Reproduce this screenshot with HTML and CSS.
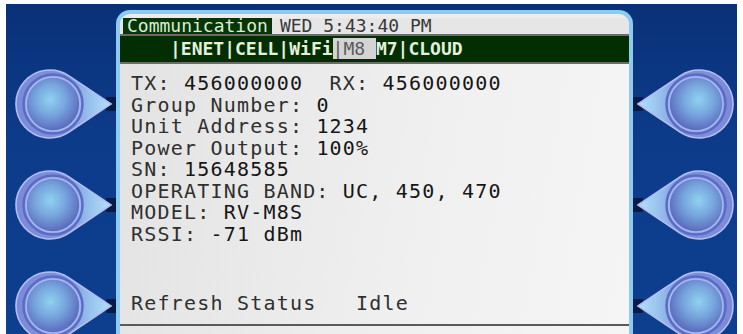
FILE: index.html
```html
<!DOCTYPE html>
<html lang="en">
<head>
    <meta charset="UTF-8">
    <meta name="viewport" content="width=device-width, initial-scale=1.0">
    <title>Communication - M8</title>
    <link rel="stylesheet" href="styles.css">
</head>
<body>
    <svg class="defs" width="0" height="0">
        <defs>
            <linearGradient id="dropFill" x1="0" y1="0" x2="1" y2="0">
                <stop offset="0" stop-color="#7a8ad8"/>
                <stop offset="0.55" stop-color="#8093dc"/>
                <stop offset="0.78" stop-color="#98c2ee"/>
                <stop offset="1" stop-color="#b2e2f8"/>
            </linearGradient>
            <radialGradient id="ballFill" cx="0.45" cy="0.42" r="0.62">
                <stop offset="0" stop-color="#8ed2ef"/>
                <stop offset="0.45" stop-color="#78a6de"/>
                <stop offset="1" stop-color="#5562b8"/>
            </radialGradient>
            <g id="key">
                <rect x="92" y="31" width="10" height="14" fill="#061b46"/>
                <path d="M97 38 L54.95 9.8 A34 34 0 1 0 54.95 66.2 Z" fill="url(#dropFill)" stroke="#b4bdf2" stroke-width="1.6"/>
                <circle cx="39" cy="38" r="29.5" fill="none" stroke="#5c6cc4" stroke-width="2.5"/>
                <circle cx="39" cy="38" r="27" fill="url(#ballFill)" stroke="#a6b8f2" stroke-width="1.6"/>
            </g>
        </defs>
    </svg>

    <div class="frame">
        <div class="console">
            <div class="keys">
                <svg class="key" viewBox="0 0 102 76"><use href="#key"/></svg>
                <svg class="key" viewBox="0 0 102 76"><use href="#key"/></svg>
                <svg class="key" viewBox="0 0 102 76"><use href="#key"/></svg>
            </div>

            <div class="screen">
                <div class="title-row"><span class="title">Communication</span><span class="clock">WED 5:43:40 PM</span></div>
                <div class="tabs"><span>|ENET|CELL|WiFi</span><span class="tab-on">|M8 </span><span>M7|CLOUD</span></div>
                <div class="info">
                    <div class="line">TX: <span class="val">456000000</span>  RX: <span class="val">456000000</span></div>
                    <div class="line">Group Number: <span class="val">0</span></div>
                    <div class="line">Unit Address: <span class="val">1234</span></div>
                    <div class="line">Power Output: <span class="val">100%</span></div>
                    <div class="line">SN: <span class="val">15648585</span></div>
                    <div class="line">OPERATING BAND: <span class="val">UC, 450, 470</span></div>
                    <div class="line">MODEL: <span class="val">RV-M8S</span></div>
                    <div class="line">RSSI: <span class="val">-71 dBm</span></div>
                    <div class="line status">Refresh Status   Idle</div>
                    <div class="rule"></div>
                </div>
            </div>

            <div class="keys right">
                <svg class="key" viewBox="0 0 102 76"><use href="#key"/></svg>
                <svg class="key" viewBox="0 0 102 76"><use href="#key"/></svg>
                <svg class="key" viewBox="0 0 102 76"><use href="#key"/></svg>
            </div>
        </div>
    </div>
</body>
</html>
```

FILE: styles.css
```css
body {
    margin: 0;
    background-color: #ffffff;
    font-family: "DejaVu Sans Mono", "Liberation Mono", monospace;
}
.defs {
    display: block;
    height: 0;
    overflow: hidden;
}
.frame {
    height: 334px;
    padding: 4px 6px 0;
    box-sizing: border-box;
    overflow: hidden;
}
.console {
    display: grid;
    grid-template-columns: 110px 517px 1fr;
    align-items: start;
    height: 330px;
    background: linear-gradient(#0a3178, #0c3b8a 40%, #0d3f8f);
}
.keys {
    display: flex;
    flex-direction: column;
    gap: 25px;
    padding: 62px 0 0 8px;
}
.keys.right {
    padding-left: 0;
}
.key {
    display: block;
    width: 102px;
    height: 76px;
}
.keys.right .key {
    transform: scaleX(-1);
}
.screen {
    margin-top: 6px;
    height: 324px;
    display: flex;
    flex-direction: column;
    border: 4px solid #8fcaef;
    border-bottom: 0;
    border-radius: 14px 14px 0 0;
    background-color: #ececec;
    overflow: hidden;
}
.title-row {
    display: flex;
    align-items: center;
    height: 16px;
    margin-top: 4px;
    padding-left: 3px;
    font-size: 18px;
    line-height: 16px;
    white-space: pre;
    background-color: #e6e6e6;
}
.title {
    padding: 0 4px;
    background-color: #063606;
    color: #d9eed2;
}
.clock {
    margin-left: 8px;
    color: #3a3a3a;
}
.tabs {
    height: 26px;
    padding-left: 50px;
    border-top: 2px solid #6b6b6b;
    border-bottom: 2px solid #6b6b6b;
    background-color: #022e02;
    color: #e2f1da;
    font-size: 18px;
    font-weight: bold;
    line-height: 26px;
    white-space: pre;
}
.tab-on {
    background-color: #d4d4d4;
    color: #5a5a5a;
    font-weight: normal;
}
.info {
    flex: 1;
    padding: 9px 0 0 11px;
    font-size: 20px;
    letter-spacing: 1.2px;
    line-height: 21.5px;
    color: #303030;
    background: linear-gradient(100deg, #e3e3e3, #f0f0f0 60%, #f5f5f5);
}
.line {
    white-space: pre;
}
.val {
    color: #161616;
}
.status {
    margin-top: 48px;
}
.rule {
    height: 2px;
    margin: 9px 0 0 -11px;
    background-color: #5a5a5a;
}
```
